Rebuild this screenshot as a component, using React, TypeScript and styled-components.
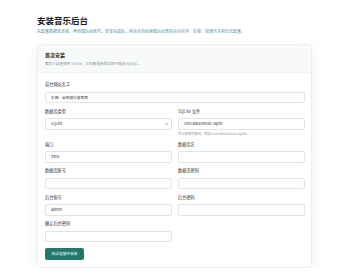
import styled, { createGlobalStyle } from 'styled-components'

const GlobalStyle = createGlobalStyle`
  html, body {
    margin: 0;
    padding: 0;
    background: #ffffff;
  }
  body {
    font-family: 'Noto Sans CJK SC', 'Noto Sans', sans-serif;
    color: #222;
  }
`

interface Field {
  label: string
  value?: string
  select?: boolean
  hint?: string
  span?: boolean
}

const fields: Field[] = [
  { label: '前台网站名字', value: '折梅·全网音乐搜索器', span: true },
  { label: '数据库类型', value: 'SQLite', select: true },
  { label: 'SQLite 文件', value: 'core/data/music.sqlite', hint: '可以填相对路径，例如 core/data/music.sqlite。' },
  { label: '端口', value: '3306' },
  { label: '数据库名' },
  { label: '数据库账号' },
  { label: '数据库密码' },
  { label: '后台账号', value: 'admin' },
  { label: '后台密码' },
  { label: '确认后台密码' },
]

function App() {
  return (
    <Page>
      <GlobalStyle />
      <Title>安装音乐后台</Title>
      <Lead>
        先配置数据库连接，再创建后台账号。安装完成后，前台会自动读取后台里的站点名字、友链、资源开关和日志配置。
      </Lead>
      <Card>
        <CardHead>
          <CardTitle>首次安装</CardTitle>
          <CardNote>推荐小站直接用 SQLite；已有数据库服务器时再选 MySQL。</CardNote>
        </CardHead>
        <Form>
          <Grid>
            {fields.map((f) => (
              <Cell key={f.label} $span={f.span}>
                <Label>{f.label}</Label>
                {f.select ? (
                  <Select>
                    <span>{f.value}</span>
                    <svg width="3" height="2" viewBox="0 0 3 2">
                      <path d="M0.3 0.3 L1.5 1.6 L2.7 0.3" fill="none" stroke="#444" strokeWidth="0.6" />
                    </svg>
                  </Select>
                ) : (
                  <Input>{f.value}</Input>
                )}
                {f.hint && <Hint>{f.hint}</Hint>}
              </Cell>
            ))}
          </Grid>
          <Button>测试连接并安装</Button>
        </Form>
      </Card>
    </Page>
  )
}

const Page = styled.div`
  width: 275px;
  padding: 13px 0 0 37px;
`

const Title = styled.h1`
  margin: 0;
  font-size: 8.5px;
  line-height: 14px;
  font-weight: 700;
  color: #1c1c1c;
`

const Lead = styled.p`
  margin: 1px 0 0;
  font-size: 4px;
  line-height: 7px;
  color: #5b8a94;
  white-space: nowrap;
`

const Card = styled.section`
  margin-top: 9px;
  background: #fff;
  border: 1px solid #eceff2;
  border-radius: 3px;
  box-shadow: 0 4px 14px rgba(30, 50, 70, 0.07);
  overflow: hidden;
`

const CardHead = styled.div`
  background: #f8fafa;
  border-bottom: 1px solid #f0f2f4;
  padding: 6px 7px 5px;
`

const CardTitle = styled.div`
  font-size: 5px;
  line-height: 8px;
  font-weight: 700;
  color: #1c1c1c;
`

const CardNote = styled.div`
  margin-top: 2px;
  font-size: 3.6px;
  line-height: 6px;
  color: #8a9499;
`

const Form = styled.div`
  padding: 8px 6px 7px 7px;
`

const Grid = styled.div`
  display: grid;
  grid-template-columns: 1fr 1fr;
  column-gap: 6px;
  row-gap: 4.5px;
`

const Cell = styled.div<{ $span?: boolean }>`
  display: flex;
  flex-direction: column;
  grid-column: ${(p) => (p.$span ? '1 / span 2' : 'auto')};
`

const Label = styled.div`
  font-size: 4.2px;
  line-height: 6px;
  color: #333;
  margin-bottom: 4.5px;
`

const Input = styled.div`
  box-sizing: border-box;
  height: 11.5px;
  border: 1px solid #e0e4e8;
  border-radius: 2px;
  padding: 0 5px;
  display: flex;
  align-items: center;
  font-size: 3.7px;
  color: #333;
  background: #fff;
`

const Select = styled(Input)`
  justify-content: space-between;
  padding-right: 3.5px;
`

const Hint = styled.div`
  margin-top: 1.5px;
  font-size: 3.3px;
  line-height: 5px;
  color: #8a949a;
`

const Button = styled.button`
  display: block;
  margin-top: 6px;
  width: 39px;
  height: 12px;
  padding: 0;
  border: none;
  border-radius: 2px;
  background: #22796b;
  color: #fff;
  font-family: inherit;
  font-size: 3.7px;
  line-height: 12px;
`

export default App
